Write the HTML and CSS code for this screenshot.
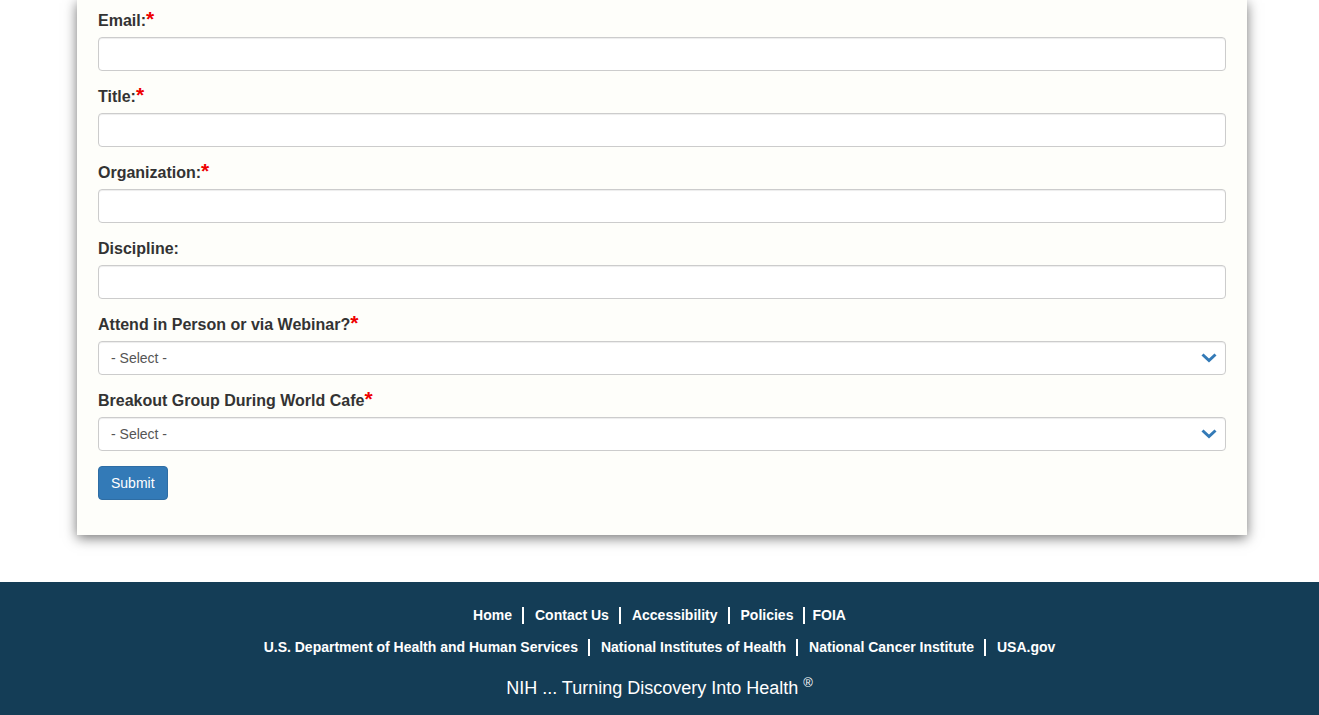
FILE: index.html
```html
<!DOCTYPE html>
<html lang="en">
<head>
    <meta charset="UTF-8">
    <meta name="viewport" content="width=device-width, initial-scale=1.0">
    <title>Registration</title>
    <link rel="stylesheet" href="styles.css">
</head>
<body>
    <div class="page">
        <form class="card">
            <div class="form-group">
                <label for="email">Email:<span class="req">*</span></label>
                <input type="text" id="email" class="form-control">
            </div>
            <div class="form-group">
                <label for="title">Title:<span class="req">*</span></label>
                <input type="text" id="title" class="form-control">
            </div>
            <div class="form-group">
                <label for="org">Organization:<span class="req">*</span></label>
                <input type="text" id="org" class="form-control">
            </div>
            <div class="form-group">
                <label for="discipline">Discipline:</label>
                <input type="text" id="discipline" class="form-control">
            </div>
            <div class="form-group">
                <label for="attend">Attend in Person or via Webinar?<span class="req">*</span></label>
                <div class="select-wrap">
                    <select id="attend" class="form-control">
                        <option>- Select -</option>
                        <option>In Person</option>
                        <option>Webinar</option>
                    </select>
                    <svg class="chevron" viewBox="0 0 16 10" width="16" height="10"><path d="M1.5 1.5 L8 7.5 L14.5 1.5" fill="none" stroke="#337ab7" stroke-width="3"/></svg>
                </div>
            </div>
            <div class="form-group">
                <label for="breakout">Breakout Group During World Cafe<span class="req">*</span></label>
                <div class="select-wrap">
                    <select id="breakout" class="form-control">
                        <option>- Select -</option>
                    </select>
                    <svg class="chevron" viewBox="0 0 16 10" width="16" height="10"><path d="M1.5 1.5 L8 7.5 L14.5 1.5" fill="none" stroke="#337ab7" stroke-width="3"/></svg>
                </div>
            </div>
            <button type="button" class="btn-submit">Submit</button>
        </form>
    </div>

    <footer class="footer">
        <div class="footer-links">
            <a href="#">Home</a><span class="sep"></span>
            <a href="#">Contact Us</a><span class="sep"></span>
            <a href="#">Accessibility</a><span class="sep"></span>
            <a href="#">Policies</a><span class="sep tight"></span>
            <a href="#">FOIA</a>
        </div>
        <div class="footer-links">
            <a href="#">U.S. Department of Health and Human Services</a><span class="sep"></span>
            <a href="#">National Institutes of Health</a><span class="sep"></span>
            <a href="#">National Cancer Institute</a><span class="sep"></span>
            <a href="#">USA.gov</a>
        </div>
        <div class="tagline">NIH ... Turning Discovery Into Health <sup>&reg;</sup></div>
    </footer>
</body>
</html>
```

FILE: styles.css
```css
* {
    box-sizing: border-box;
}

body {
    margin: 0;
    background: #fff;
    font-family: 'Liberation Sans', Arial, sans-serif;
    color: #333;
}

.page {
    padding-bottom: 47px;
}

.card {
    width: 1170px;
    margin: 0 0 0 77px;
    background: #fefefa;
    padding: 10px 21px 35px;
    box-shadow: 0 3px 12px rgba(0, 0, 0, 0.55);
}

.form-group {
    margin-bottom: 15px;
}

.form-group label {
    display: block;
    font-size: 16px;
    font-weight: bold;
    line-height: 22px;
    margin-bottom: 5px;
    color: #333;
}

.req {
    color: #e00;
    font-size: 21px;
    line-height: 16px;
}

.form-control {
    display: block;
    width: 100%;
    height: 34px;
    padding: 6px 12px;
    border: 1px solid #ccc;
    border-radius: 4px;
    background: #fff;
    font-family: 'Liberation Sans', Arial, sans-serif;
    font-size: 14px;
    color: #555;
    box-shadow: inset 0 1px 1px rgba(0, 0, 0, 0.075);
}

.select-wrap {
    position: relative;
}

.select-wrap select {
    appearance: none;
    -webkit-appearance: none;
}

.chevron {
    position: absolute;
    right: 9px;
    top: 12px;
    pointer-events: none;
}

.btn-submit {
    display: block;
    height: 34px;
    padding: 6px 12px;
    background: #337ab7;
    border: 1px solid #2e6da4;
    border-radius: 4px;
    color: #fff;
    font-family: 'Liberation Sans', Arial, sans-serif;
    font-size: 14px;
    cursor: pointer;
}

.footer {
    background: #143d56;
    color: #fff;
    padding: 17px 0 20px;
    text-align: center;
}

.footer-links {
    display: flex;
    justify-content: center;
    align-items: center;
    height: 32px;
}

.footer-links a {
    color: #fff;
    font-weight: bold;
    font-size: 14px;
    text-decoration: none;
}

.sep {
    display: inline-block;
    width: 2px;
    height: 17px;
    background: #fff;
    margin: 0 11px 0 10px;
}

.sep.tight {
    margin: 0 7px 0 10px;
}

.tagline {
    font-size: 18px;
    margin-top: 12px;
}

.tagline sup {
    font-size: 13px;
}
```
